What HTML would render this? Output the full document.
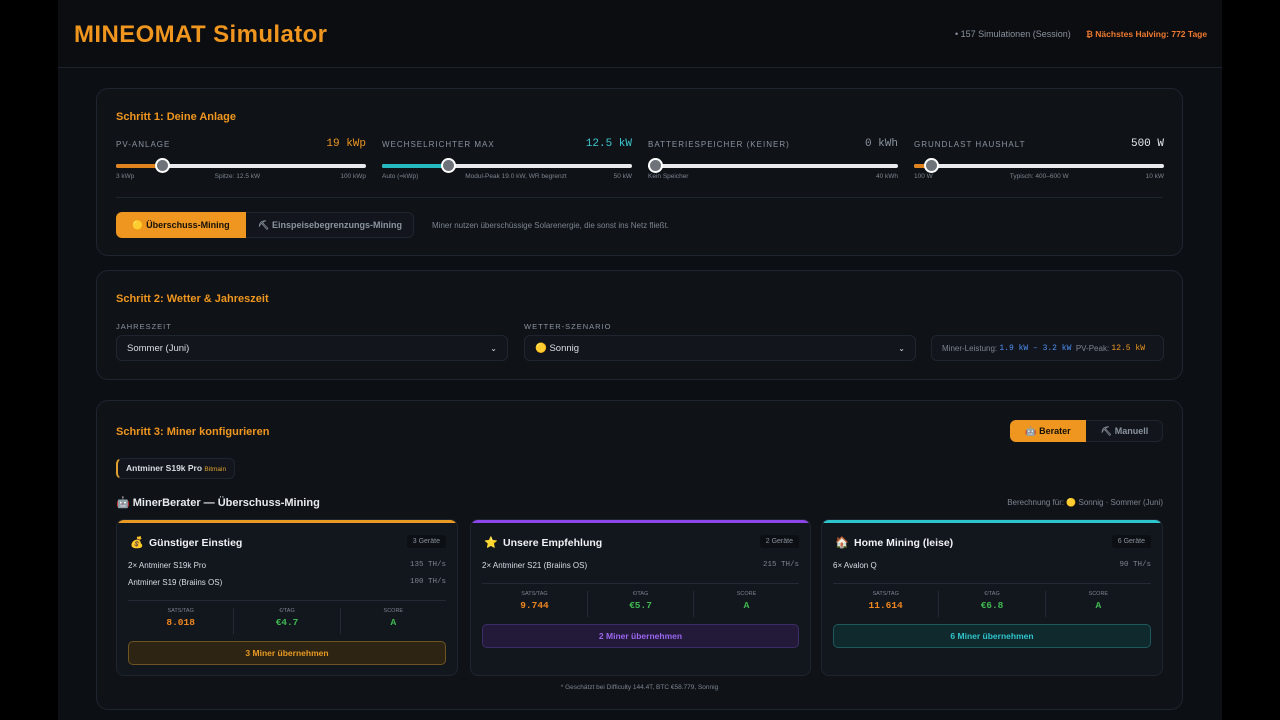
<!DOCTYPE html>
<html><head><meta charset="utf-8"><style>
*{box-sizing:border-box;margin:0;padding:0}
body{width:1280px;height:720px;overflow:hidden;background:#000;font-family:"Liberation Sans","DejaVu Sans",sans-serif;color:#d8dde4}
.main{position:absolute;left:58px;top:0;width:1164px;height:720px;background:#0c0f14}
.hdr{position:absolute;left:0;top:0;width:1164px;height:68px;border-bottom:1px solid #1d232b;background:#0b0d11}
.title{position:absolute;left:16px;top:21px;font-size:24px;font-weight:bold;color:#f0961e;letter-spacing:0.4px}
.sim{position:absolute;left:898px;top:29px;font-size:9px;color:#8b939e}
.sim i{display:inline-block;width:5px;height:5px;border-radius:50%;background:#3fb950;margin-right:4px;vertical-align:1px}
.halv{position:absolute;left:1028px;top:29px;font-size:8.5px;color:#f07a2e;font-weight:bold}
.card{position:absolute;left:38px;width:1087px;background:#0f1318;border:1px solid #1f252e;border-radius:12px}
.ct{position:absolute;left:19px;font-size:11px;font-weight:bold;color:#f0961e}
.sl{position:absolute;top:48px;width:250px}
.lab{font-size:8px;letter-spacing:1px;color:#8b939e;position:absolute;top:3px;left:0}
.val{position:absolute;right:0;top:1px;font-family:"Liberation Mono",monospace;font-size:11px}
.track{position:absolute;top:27px;left:0;width:250px;height:4px;background:#e8eaed;border-radius:2px}
.fill{position:absolute;left:0;top:0;height:4px;border-radius:2px}
.knob{position:absolute;top:-6px;width:15px;height:15px;border-radius:50%;background:#6e7379;border:2px solid #fff;margin-left:-7px}
.sub{position:absolute;top:36px;left:0;width:250px;font-size:6.5px;color:#7d848e;display:flex;justify-content:space-between}
.btn{position:absolute;font-size:9px;font-weight:bold;display:flex;align-items:center;justify-content:center}
.sel{position:absolute;top:64px;height:26px;background:#12161c;border:1px solid #1f252e;border-radius:6px;font-size:9.5px;color:#d8dde4;padding:0 10px;display:flex;align-items:center;justify-content:space-between}
.sm{font-size:7.5px;letter-spacing:1px;color:#8b939e;position:absolute;top:51px}
.rc{position:absolute;top:118px;width:342px;height:157px;background:#12161d;border:1px solid #1f252e;border-radius:8px;overflow:hidden}
.rc .bar{position:absolute;left:0;top:0;right:0;height:3px}
.rc h3{position:absolute;left:32px;top:17px;font-size:10.5px;color:#f0f2f5}
.rc .ic{position:absolute;left:13px;top:16px;font-size:11px}
.rc .cnt{position:absolute;right:11px;top:15px;background:#0c0f13;border-radius:3px;font-size:7px;color:#8b939e;padding:3px 6px}
.rc .ln{position:absolute;left:11px;right:11px;font-size:8px;color:#d8dde4}
.rc .ln span{float:right;font-family:"Liberation Mono",monospace;color:#7d848e;font-size:7.5px}
.stats{position:absolute;left:11px;right:11px;border-top:1px solid #232a33;display:flex;padding-top:7px}
.stats div{flex:1;text-align:center;font-size:5.5px;color:#7d848e;border-right:1px solid #232a33;height:26px}
.stats div:last-child{border:none}
.stats b{display:block;font-family:"Liberation Mono",monospace;font-size:9.5px;margin-top:3px}
.rb{position:absolute;left:11px;right:11px;height:24px;border-radius:5px;font-size:8.5px;font-weight:bold;display:flex;align-items:center;justify-content:center}
</style></head><body>
<div class="main">
<div class="hdr">
<div class="title">MINEOMAT Simulator</div>
<div class="sim" style="left:897px">• 157 Simulationen (Session)</div>
<div class="halv" style="left:1028px">₿ Nächstes Halving: 772 Tage</div>
</div>

<div class="card" style="top:88px;height:168px">
<div class="ct" style="top:22px">Schritt 1: Deine Anlage</div>
<div class="sl" style="left:19px"><div class="lab">PV-ANLAGE</div><div class="val" style="color:#f0961e">19 kWp</div>
<div class="track"><div class="fill" style="width:46px;background:#e0831e"></div><div class="knob" style="left:46px"></div></div>
<div class="sub"><span>3 kWp</span><span>Spitze: 12.5 kW</span><span>100 kWp</span></div></div>
<div class="sl" style="left:285px"><div class="lab">WECHSELRICHTER MAX</div><div class="val" style="color:#3cc8d0">12.5 kW</div>
<div class="track"><div class="fill" style="width:66px;background:#25b9c1"></div><div class="knob" style="left:66px"></div></div>
<div class="sub"><span>Auto (=kWp)</span><span>Modul-Peak 19.0 kW, WR begrenzt</span><span>50 kW</span></div></div>
<div class="sl" style="left:551px"><div class="lab">BATTERIESPEICHER (KEINER)</div><div class="val" style="color:#8b939e">0 kWh</div>
<div class="track"><div class="knob" style="left:7px"></div></div>
<div class="sub"><span>Kein Speicher</span><span>40 kWh</span></div></div>
<div class="sl" style="left:817px"><div class="lab">GRUNDLAST HAUSHALT</div><div class="val" style="color:#e8eaed">500 W</div>
<div class="track"><div class="fill" style="width:17px;background:#e0831e"></div><div class="knob" style="left:17px"></div></div>
<div class="sub"><span>100 W</span><span>Typisch: 400–600 W</span><span>10 kW</span></div></div>
<div style="position:absolute;left:19px;right:19px;top:108px;border-top:1px solid #1f252e"></div>
<div style="position:absolute;left:19px;top:123px;width:298px;height:26px;border:1px solid #1f252e;border-radius:6px;background:#12161c"></div>
<div class="btn" style="left:19px;top:123px;width:130px;height:26px;background:#ee9620;color:#15100a;border-radius:6px 0 0 6px">🟡 Überschuss-Mining</div>
<div class="btn" style="left:149px;top:123px;width:168px;height:26px;color:#8b939e">⛏ Einspeisebegrenzungs-Mining</div>
<div style="position:absolute;left:335px;top:132px;font-size:8px;color:#7d848e">Miner nutzen überschüssige Solarenergie, die sonst ins Netz fließt.</div>
</div>

<div class="card" style="top:270px;height:110px">
<div class="ct" style="top:22px">Schritt 2: Wetter &amp; Jahreszeit</div>
<div class="sm" style="left:19px">JAHRESZEIT</div>
<div class="sm" style="left:427px">WETTER-SZENARIO</div>
<div class="sel" style="left:19px;width:392px"><span>Sommer (Juni)</span><span style="font-size:8px">⌄</span></div>
<div class="sel" style="left:427px;width:392px"><span>🟡 Sonnig</span><span style="font-size:8px">⌄</span></div>
<div class="sel" style="left:834px;width:233px;font-size:8px;color:#7d848e;justify-content:flex-start">Miner-Leistung:&nbsp;<span style="font-family:Liberation Mono,monospace;color:#4f8ff7">1.9 kW – 3.2 kW</span>&nbsp; PV-Peak:&nbsp;<span style="font-family:Liberation Mono,monospace;color:#f0961e">12.5 kW</span></div>
</div>

<div class="card" style="top:400px;height:310px">
<div class="ct" style="top:25px">Schritt 3: Miner konfigurieren</div>
<div style="position:absolute;left:913px;top:19px;width:153px;height:22px;border:1px solid #1f252e;border-radius:6px;background:#12161c"></div>
<div class="btn" style="left:913px;top:19px;width:76px;height:22px;background:#ee9620;color:#15100a;border-radius:6px 0 0 6px">🤖 Berater</div>
<div class="btn" style="left:989px;top:19px;width:77px;height:22px;color:#8b939e">⛏ Manuell</div>
<div style="position:absolute;left:19px;top:57px;height:21px;padding:0 8px;border:1px solid #1f252e;border-left:2px solid #e0a030;border-radius:6px;background:#12161c;font-size:8.5px;font-weight:bold;line-height:19px">Antminer S19k Pro <span style="font-size:6.5px;color:#e0a030;font-weight:normal">Bitmain</span></div>
<div style="position:absolute;left:19px;top:95px;font-size:11px;font-weight:bold;color:#e8eaed">🤖 MinerBerater — Überschuss-Mining</div>
<div style="position:absolute;right:19px;top:97px;font-size:8px;color:#7d848e">Berechnung für: 🟡 Sonnig · Sommer (Juni)</div>

<div class="rc" style="left:19px"><div class="bar" style="background:#e89a22"></div>
<div class="ic">💰</div><h3>Günstiger Einstieg</h3><div class="cnt">3 Geräte</div>
<div class="ln" style="top:41px">2× Antminer S19k Pro<span>135 TH/s</span></div>
<div class="ln" style="top:58px">Antminer S19 (Braiins OS)<span>100 TH/s</span></div>
<div class="stats" style="top:80px"><div>SATS/TAG<b style="color:#f0861e">8.018</b></div><div>€/TAG<b style="color:#3fb950">€4.7</b></div><div>SCORE<b style="color:#3fb950">A</b></div></div>
<div class="rb" style="top:121px;background:#2d2414;border:1px solid #6e5420;color:#e89a22">3 Miner übernehmen</div></div>

<div class="rc" style="left:373px;width:341px"><div class="bar" style="background:#8b45e8"></div>
<div class="ic">⭐</div><h3>Unsere Empfehlung</h3><div class="cnt">2 Geräte</div>
<div class="ln" style="top:41px">2× Antminer S21 (Braiins OS)<span>215 TH/s</span></div>
<div class="stats" style="top:63px"><div>SATS/TAG<b style="color:#f0861e">9.744</b></div><div>€/TAG<b style="color:#3fb950">€5.7</b></div><div>SCORE<b style="color:#3fb950">A</b></div></div>
<div class="rb" style="top:104px;background:#231a3a;border:1px solid #3d2d66;color:#9b66f0">2 Miner übernehmen</div></div>

<div class="rc" style="left:724px;width:342px"><div class="bar" style="background:#2ec4cc"></div>
<div class="ic">🏠</div><h3>Home Mining (leise)</h3><div class="cnt">6 Geräte</div>
<div class="ln" style="top:41px">6× Avalon Q<span>90 TH/s</span></div>
<div class="stats" style="top:63px"><div>SATS/TAG<b style="color:#f0861e">11.614</b></div><div>€/TAG<b style="color:#3fb950">€6.8</b></div><div>SCORE<b style="color:#3fb950">A</b></div></div>
<div class="rb" style="top:104px;background:#10292c;border:1px solid #1d5a5e;color:#2ec4cc">6 Miner übernehmen</div></div>

<div style="position:absolute;left:0;right:0;top:283px;text-align:center;font-size:6.5px;color:#7d848e">* Geschätzt bei Difficulty 144.4T, BTC €58.779, Sonnig</div>
</div>
</div>
</body></html>
